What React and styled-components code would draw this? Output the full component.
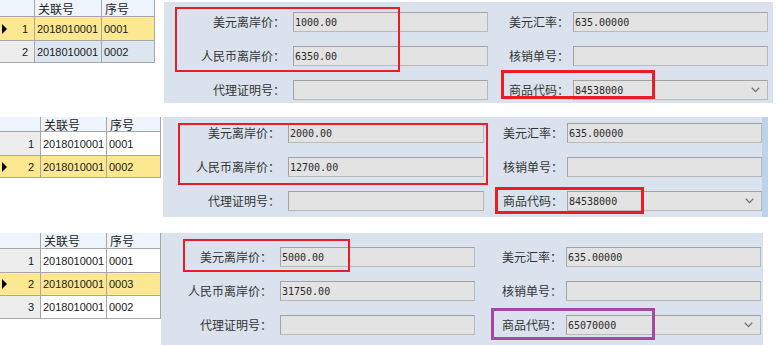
import React from 'react';
import styled, { createGlobalStyle } from 'styled-components';

const RED = '#ec1c24';
const PURPLE = '#a349a4';

const Global = createGlobalStyle`
  html, body { margin: 0; padding: 0; background: #ffffff; }
  body { font-family: "Noto Sans CJK SC", "Liberation Sans", sans-serif; }
`;

const Page = styled.div`
  width: 777px;
  height: 345px;
  overflow: hidden;
  display: flex;
  flex-direction: column;
  background: #ffffff;
`;

const Shot = styled.section`
  position: relative;
  flex: none;
  display: flex;
  align-items: flex-start;
  height: ${(p) => p.$h}px;
  margin-top: ${(p) => p.$mt}px;
`;

const Grid = styled.div`
  flex: none;
  display: grid;
  grid-template-columns: ${(p) => p.$cols.map((c) => `${c}px`).join(' ')};
  grid-template-rows: ${(p) => p.$rows.map((r) => `${r}px`).join(' ')};
  font-family: "Liberation Sans", Arial, sans-serif;
  font-size: 11px;
  color: #1a1a1a;
`;

const HeadCell = styled.div`
  box-sizing: border-box;
  display: flex;
  align-items: center;
  padding-left: 3px;
  background: #eef4fb;
  border-right: 1px solid #a7a7a7;
  border-bottom: 1px solid #a7a7a7;
  font-family: "Noto Sans CJK SC", sans-serif;
  font-size: 12px;
  color: #222;
  white-space: nowrap;
  overflow: hidden;
`;

const rowBg = {
  sel: '#fce891',
  alt: '#dce6f1',
  plain: '#ffffff',
};

const RowHead = styled.div`
  box-sizing: border-box;
  display: flex;
  align-items: center;
  justify-content: space-between;
  padding: 0 6px 0 2px;
  background: ${(p) => (p.$state === 'sel' ? rowBg.sel : '#ededed')};
  border-right: 1px solid #a7a7a7;
  border-bottom: 1px solid #a7a7a7;
`;

const Pointer = styled.span`
  width: 0;
  height: 0;
  border-left: 5px solid #000;
  border-top: 5px solid transparent;
  border-bottom: 5px solid transparent;
  visibility: ${(p) => (p.$on ? 'visible' : 'hidden')};
`;

const Cell = styled.div`
  box-sizing: border-box;
  display: flex;
  align-items: center;
  padding-left: 2px;
  background: ${(p) => rowBg[p.$state]};
  border-right: 1px solid #a7a7a7;
  border-bottom: 1px solid #a7a7a7;
  white-space: nowrap;
`;

const Panel = styled.div`
  flex: none;
  box-sizing: border-box;
  display: flex;
  align-items: flex-start;
  width: ${(p) => p.$w}px;
  height: ${(p) => p.$h}px;
  margin-left: ${(p) => p.$ml}px;
  margin-top: ${(p) => p.$mt}px;
  padding-top: ${(p) => p.$pt}px;
  background: #dae3ed;
`;

const FieldColumn = styled.div`
  flex: none;
  display: grid;
  grid-template-columns: ${(p) => p.$lw}px ${(p) => p.$iw}px;
  grid-auto-rows: 20px;
  column-gap: ${(p) => p.$cg}px;
  row-gap: ${(p) => p.$rg}px;
  margin-left: ${(p) => p.$ml}px;
`;

const Label = styled.div`
  font-family: "Noto Sans CJK SC", sans-serif;
  font-size: 12px;
  line-height: 20px;
  color: #333;
  white-space: nowrap;
  text-align: ${(p) => p.$align};
`;

const Field = styled.div`
  box-sizing: border-box;
  height: 20px;
  display: flex;
  align-items: center;
  justify-content: space-between;
  padding: 0 7px 0 1px;
  background: #e3e3e3;
  border: 1px solid #a3a3a3;
  border-bottom-color: #b9b9b9;
  border-right-color: #b9b9b9;
  font-family: "DejaVu Sans Mono", monospace;
  font-size: 10px;
  color: #2a2a2a;
  white-space: nowrap;
`;

const Chevron = () => (
  <svg width="9" height="6" viewBox="0 0 9 6" aria-hidden="true">
    <path d="M0.8 0.8 L4.5 4.6 L8.2 0.8" fill="none" stroke="#707070" strokeWidth="1.3" />
  </svg>
);

const EdgeStrip = styled.div`
  flex: none;
  align-self: stretch;
  width: 6px;
  margin-top: ${(p) => -p.$pt}px;
  margin-left: auto;
  background: #bcd3ec;
`;

const Frame = styled.div`
  position: absolute;
  box-sizing: border-box;
  left: ${(p) => p.$x}px;
  top: ${(p) => p.$y}px;
  width: ${(p) => p.$w}px;
  height: ${(p) => p.$hh}px;
  border: ${(p) => p.$b}px solid ${(p) => p.$c};
  pointer-events: none;
`;

const ID = '2018010001';

const shots = [
  {
    mt: 0,
    h: 103,
    grid: {
      cols: [35, 67, 53],
      headH: 17,
      rows: [
        { no: 1, seq: '0001', state: 'sel', h: 24 },
        { no: 2, seq: '0002', state: 'alt', h: 22 },
      ],
    },
    panel: { ml: 9, mt: 2, w: 609, h: 101, pt: 10, rg: 14, lw: 121, iw: 195, sep: 21, strip: false },
    values: ['1000.00', '6350.00', '', '635.00000', '', '84538000'],
    frames: [
      { x: 175, y: 7, w: 225, h: 65, b: 2, c: RED },
      { x: 501, y: 70, w: 154, h: 29, b: 3, c: RED },
    ],
  },
  {
    mt: 14,
    h: 100,
    grid: {
      cols: [41, 66, 54],
      headH: 15,
      rows: [
        { no: 1, seq: '0001', state: 'plain', h: 24 },
        { no: 2, seq: '0002', state: 'sel', h: 22 },
      ],
    },
    panel: { ml: 2, mt: 0, w: 605, h: 100, pt: 6, rg: 14, lw: 117, iw: 196, sep: 19, strip: true },
    values: ['2000.00', '12700.00', '', '635.00000', '', '84538000'],
    frames: [
      { x: 178, y: 6, w: 310, h: 62, b: 2, c: RED },
      { x: 495, y: 70, w: 149, h: 27, b: 3, c: RED },
    ],
  },
  {
    mt: 16,
    h: 112,
    grid: {
      cols: [41, 66, 54],
      headH: 16,
      rows: [
        { no: 1, seq: '0001', state: 'plain', h: 24 },
        { no: 2, seq: '0003', state: 'sel', h: 23 },
        { no: 3, seq: '0002', state: 'plain', h: 23 },
      ],
    },
    panel: { ml: 0, mt: 0, w: 602, h: 112, pt: 14, rg: 14, lw: 111, iw: 195, sep: 27, strip: false },
    values: ['5000.00', '31750.00', '', '635.00000', '', '65070000'],
    frames: [
      { x: 183, y: 6, w: 167, h: 33, b: 2, c: RED },
      { x: 491, y: 75, w: 164, h: 32, b: 3, c: PURPLE },
    ],
  },
];

const leftLabels = ['美元离岸价：', '人民币离岸价：', '代理证明号：'];
const rightLabels = ['美元汇率：', '核销单号：', '商品代码：'];

function RecordGrid({ cols, headH, rows }) {
  return (
    <Grid $cols={cols} $rows={[headH, ...rows.map((r) => r.h)]}>
      <HeadCell />
      <HeadCell>关联号</HeadCell>
      <HeadCell>序号</HeadCell>
      {rows.map((r) => (
        <React.Fragment key={r.no}>
          <RowHead $state={r.state}>
            <Pointer $on={r.state === 'sel'} />
            <span>{r.no}</span>
          </RowHead>
          <Cell $state={r.state}>{ID}</Cell>
          <Cell $state={r.state}>{r.seq}</Cell>
        </React.Fragment>
      ))}
    </Grid>
  );
}

function FormPanel({ panel, values }) {
  return (
    <Panel $w={panel.w} $h={panel.h} $ml={panel.ml} $mt={panel.mt} $pt={panel.pt}>
      <FieldColumn $lw={panel.lw} $iw={panel.iw} $cg={8} $rg={panel.rg} $ml={0}>
        {leftLabels.map((l, i) => (
          <React.Fragment key={l}>
            <Label $align="right">{l}</Label>
            <Field>{values[i]}</Field>
          </React.Fragment>
        ))}
      </FieldColumn>
      <FieldColumn $lw={60} $iw={195} $cg={4} $rg={panel.rg} $ml={panel.sep}>
        {rightLabels.map((l, i) => (
          <React.Fragment key={l}>
            <Label $align="left">{l}</Label>
            <Field>
              <span>{values[3 + i]}</span>
              {i === 2 && <Chevron />}
            </Field>
          </React.Fragment>
        ))}
      </FieldColumn>
      {panel.strip && <EdgeStrip $pt={panel.pt} />}
    </Panel>
  );
}

export default function App() {
  return (
    <Page>
      <Global />
      {shots.map((s, idx) => (
        <Shot key={idx} $h={s.h} $mt={s.mt}>
          <RecordGrid {...s.grid} />
          <FormPanel panel={s.panel} values={s.values} />
          {s.frames.map((f, j) => (
            <Frame key={j} $x={f.x} $y={f.y} $w={f.w} $hh={f.h} $b={f.b} $c={f.c} />
          ))}
        </Shot>
      ))}
    </Page>
  );
}
